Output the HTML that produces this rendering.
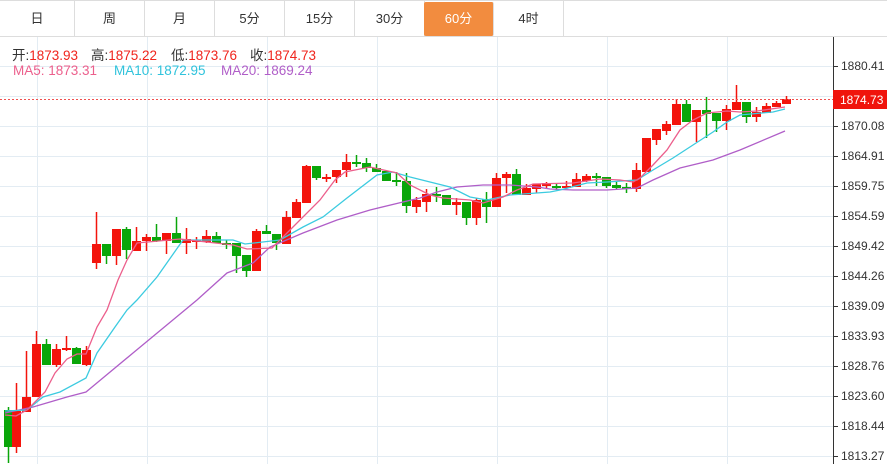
<!DOCTYPE html>
<html><head><meta charset="utf-8"><style>
body{margin:0;width:887px;height:464px;overflow:hidden;background:#fff;font-family:"Liberation Sans","Noto Sans CJK SC",sans-serif;position:relative}
.tabs{position:absolute;left:0;top:0;width:887px;height:37px;border-top:1px solid #ddd;border-bottom:1px solid #ddd;box-sizing:border-box}
.tab{position:absolute;top:0;height:36px;line-height:36px;text-align:center;font-size:13px;color:#333;border-right:1px solid #ddd;box-sizing:border-box}
.tab.on{background:#f28c3f;color:#fff;top:1px;height:34px;line-height:34px;border-radius:2px}
.hd{position:absolute;font-size:13.5px;white-space:nowrap}
.hd span{position:absolute}
.k{color:#333}.r{color:#f0241c}
.lab{position:absolute;left:841px;font-size:12px;color:#333}
</style></head><body>
<svg width="887" height="464" style="position:absolute;left:0;top:0">
<g stroke="#e3ecf3" stroke-width="1" id="grid"></g>
<g id="c"></g>
<polyline fill="none" stroke="#b05ec8" stroke-width="1.3" points="5,413 33,407 67,397 86,392 133,353 197,300 227,273 253,263 270,247 303,233 337,220 370,210 403,202 420,198 437,192 457,187 483,185 510,185 537,187 550,189 573,190 607,190 637,188 653,180 680,168 713,160 740,150 785,131"/>
<polyline fill="none" stroke="#3ccbe0" stroke-width="1.3" points="5,411 27,410 43,397 60,392 86,378 97,353 115,327 127,310 137,300 157,277 183,240 233,240 245,244 280,240 303,227 323,217 347,198 377,175 393,172 410,177 430,182 450,187 470,197 487,200 510,195 550,192 560,190 587,183 607,182 637,180 653,170 673,158 693,145 713,132 727,122 740,115 773,112 785,109"/>
<polyline fill="none" stroke="#ec5f8c" stroke-width="1.3" points="5,415 16,416 27,410 45,392 55,373 67,359 77,354 86,354 97,327 107,310 118,280 127,260 137,243 180,239 233,245 247,249 272,248 290,230 320,200 335,180 345,172 370,167 397,173 410,185 430,195 443,198 470,200 483,203 503,197 517,190 533,184 573,183 600,179 620,180 633,182 640,178 653,165 667,150 680,130 693,120 707,113 727,111 740,112 757,111 785,107"/>
<line x1="0" y1="99.5" x2="833" y2="99.5" stroke="#f05050" stroke-dasharray="2,2"/>
<line x1="833.5" y1="37" x2="833.5" y2="464" stroke="#333"/>
<g id="ticks" stroke="#333"></g>
<rect x="833" y="90" width="54" height="19" fill="#f0140c"/>
<text x="840" y="104" font-size="12" fill="#fff" font-family="Liberation Sans">1874.73</text>
</svg>
<div class="tabs">
<div class="tab" style="left:0;width:75px">日</div>
<div class="tab" style="left:75px;width:70px">周</div>
<div class="tab" style="left:145px;width:70px">月</div>
<div class="tab" style="left:215px;width:70px">5分</div>
<div class="tab" style="left:285px;width:70px">15分</div>
<div class="tab" style="left:355px;width:70px">30分</div>
<div class="tab on" style="left:424px;width:70px">60分</div>
<div class="tab" style="left:494px;width:70px">4时</div>
<div class="tab" style="left:564px;width:70px;border:none"></div>
</div>
<div class="hd" style="left:0;top:44px;height:16px">
<span style="left:12px"><b class="k" style="font-weight:normal">开:</b><b class="r" style="font-weight:normal">1873.93</b></span>
<span style="left:91px"><b class="k" style="font-weight:normal">高:</b><b class="r" style="font-weight:normal">1875.22</b></span>
<span style="left:171px"><b class="k" style="font-weight:normal">低:</b><b class="r" style="font-weight:normal">1873.76</b></span>
<span style="left:250px"><b class="k" style="font-weight:normal">收:</b><b class="r" style="font-weight:normal">1874.73</b></span>
</div>
<div class="hd" style="left:0;top:63px">
<span style="left:13px;color:#ec5f8c">MA5: 1873.31</span>
<span style="left:114px;color:#2fc3dc">MA10: 1872.95</span>
<span style="left:221px;color:#b05ec8">MA20: 1869.24</span>
</div>
<div class="lab" style="top:59px">1880.41</div>
<div class="lab" style="top:119px">1870.08</div>
<div class="lab" style="top:149px">1864.91</div>
<div class="lab" style="top:179px">1859.75</div>
<div class="lab" style="top:209px">1854.59</div>
<div class="lab" style="top:239px">1849.42</div>
<div class="lab" style="top:269px">1844.26</div>
<div class="lab" style="top:299px">1839.09</div>
<div class="lab" style="top:329px">1833.93</div>
<div class="lab" style="top:359px">1828.76</div>
<div class="lab" style="top:389px">1823.60</div>
<div class="lab" style="top:419px">1818.44</div>
<div class="lab" style="top:449px">1813.27</div>
<script>
var ns="http://www.w3.org/2000/svg";
function el(p,t,a){var e=document.createElementNS(ns,t);for(var k in a)e.setAttribute(k,a[k]);p.appendChild(e);}
var g=document.getElementById('grid'),tk=document.getElementById('ticks');
for(var y=66;y<=456;y+=30){el(g,'line',{x1:0,x2:833,y1:y+.5,y2:y+.5});el(tk,'line',{x1:833,x2:838,y1:y+.5,y2:y+.5});}
[37,147,267,377,497,607,727].forEach(function(x){el(g,'line',{x1:x+.5,x2:x+.5,y1:37,y2:464});});
var d=[[4,410,447,407,463,'g'],[12,411,447,383,453,'r'],[22,397,412,351,412,'r'],[32,344,397,331,397,'r'],[42,344,365,339,365,'g'],[52,349,365,344,367,'r'],[62,348,350,336,351,'r'],[72,348,364,347,364,'g'],[82,350,365,346,366,'r'],
[92,244,263,212,269,'r'],[102,244,256,244,264,'g'],[112,229,256,229,265,'r'],[122,229,250,227,259,'g'],[132,241,251,227,251,'r'],[142,237,241,234,251,'r'],[152,237,241,224,242,'g'],[162,233,241,233,254,'r'],[172,233,243,217,243,'g'],[182,239,243,228,254,'r'],[192,240,241,237,249,'r'],[202,236,242,230,243,'r'],[212,236,243,232,243,'g'],[222,243,244,240,249,'g'],[232,243,256,243,273,'g'],[242,255,271,255,277,'g'],[252,231,271,229,271,'r'],[262,231,234,225,234,'g'],[272,234,243,234,250,'g'],
[282,217,244,211,244,'r'],[292,202,218,199,218,'r'],[302,166,203,165,203,'r'],[312,166,178,166,180,'g'],[322,177,179,174,182,'r'],[332,170,177,170,183,'r'],[342,162,170,154,177,'r'],[352,162,164,155,167,'g'],[362,163,168,158,172,'g'],[372,168,172,164,172,'g'],[382,171,181,171,181,'g'],[392,180,182,172,186,'g'],[402,181,206,173,213,'g'],[412,200,207,197,213,'r'],[422,194,202,189,212,'r'],[432,194,195,187,202,'g'],[442,195,205,195,205,'g'],[452,202,205,198,215,'r'],[462,202,218,202,225,'g'],[472,200,218,198,225,'r'],[482,199,207,192,223,'g'],[492,178,207,173,207,'r'],[502,174,178,172,193,'r'],[512,174,195,169,195,'g'],[522,188,195,184,195,'r'],[532,184,189,184,193,'r'],[542,183,186,182,188,'r'],[552,186,187,183,190,'g'],[562,186,187,181,189,'r'],[572,179,187,173,187,'r'],[582,176,181,174,182,'r'],[592,176,178,173,186,'g'],[602,177,186,177,188,'g'],[612,185,188,182,189,'g'],[622,187,189,183,193,'g'],
[632,170,189,163,192,'r'],[642,138,172,138,172,'r'],[652,129,140,129,145,'r'],[662,124,131,121,135,'r'],[672,104,125,99,125,'r'],[682,104,122,100,122,'g'],[692,110,122,110,142,'r'],[702,110,114,97,138,'g'],[712,113,121,113,132,'g'],[722,109,121,105,130,'r'],[732,102,110,85,110,'r'],[742,102,117,102,123,'g'],[752,112,117,107,122,'r'],[762,106,113,103,113,'r'],[772,103,107,101,107,'r'],[782,99,104,96,104,'r']];
var c=document.getElementById('c');
d.forEach(function(a){var col=a[5]=='g'?'#0aa60a':'#f3140c';var cx=a[0]+4.5;
el(c,'line',{x1:cx,x2:cx,y1:a[3],y2:a[4],stroke:col,'stroke-width':1.5});
el(c,'rect',{x:a[0],y:a[1],width:9,height:Math.max(2,a[2]-a[1]),fill:col});});
</script>
</body></html>
